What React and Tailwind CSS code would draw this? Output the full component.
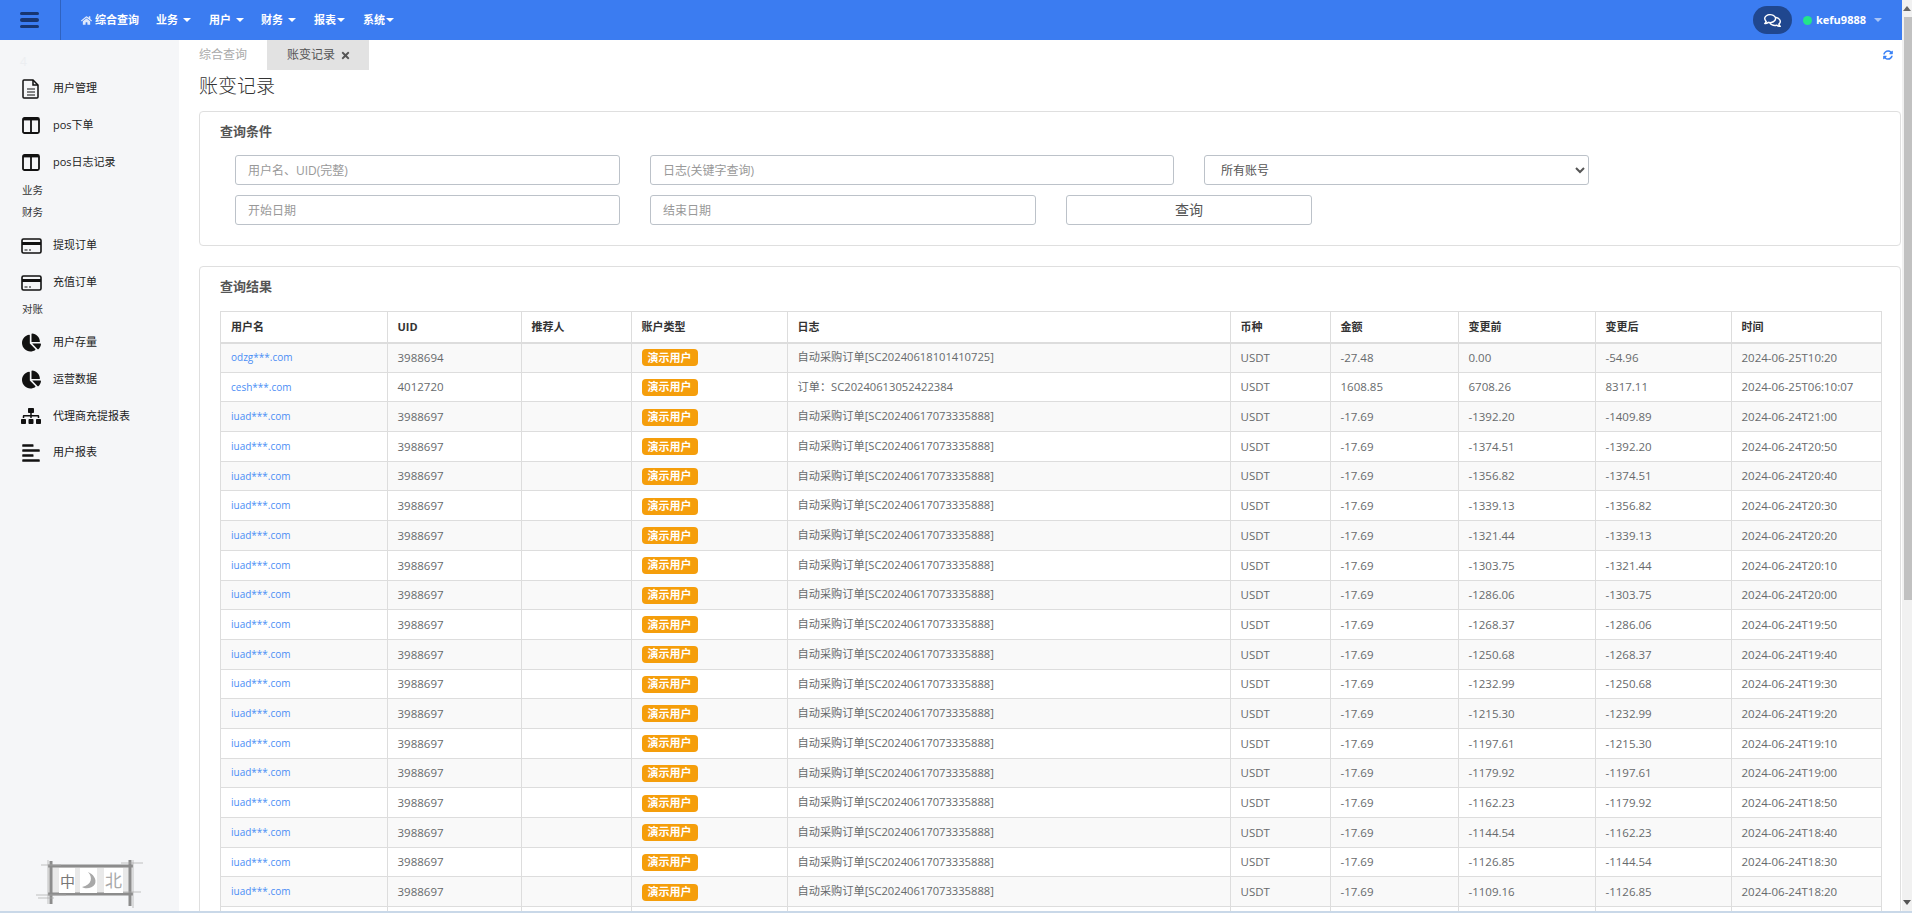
import { FaHome, FaTimes, FaSyncAlt, FaRegComments, FaChartPie, FaSitemap, FaAlignLeft } from "react-icons/fa";

const DocIcon = () => (
  <svg width="18" height="20" viewBox="0 0 18 20" fill="none" stroke="#111" strokeWidth="1.5">
    <path d="M2 1h9l5 5v12a1 1 0 0 1-1 1H2a1 1 0 0 1-1-1V2a1 1 0 0 1 1-1z" />
    <path d="M11 1v5h5" />
    <path d="M5 10h8M5 13h8M5 16h8" strokeWidth="1.2" />
  </svg>
);

const ColumnsIcon = () => (
  <svg width="18" height="17" viewBox="0 0 18 17" fill="none" stroke="#111">
    <rect x="1" y="1" width="16" height="15" rx="1.5" strokeWidth="1.8" />
    <path d="M1 2.2h16" strokeWidth="2.4" />
    <path d="M9 2v14" strokeWidth="1.8" />
  </svg>
);

const CardIcon = () => (
  <svg width="21" height="16" viewBox="0 0 21 16" fill="none" stroke="#111">
    <rect x="1" y="1" width="19" height="14" rx="1.5" strokeWidth="1.6" />
    <path d="M1 5.5h19" strokeWidth="3" />
    <path d="M3.5 12h3M8 12h2" strokeWidth="1.2" />
  </svg>
);

const Logo = () => (
  <svg width="112" height="50" viewBox="0 0 112 50" fill="none">
    <rect x="12" y="9" width="84" height="27" fill="#e9e9e9" />
    <g stroke="#8c8c8c">
      <path d="M12 8h85M12 36h85" strokeWidth="3" />
      <path d="M15 3v43M94 2v46" strokeWidth="3" />
    </g>
    <g stroke="#aaa" strokeWidth="0.7">
      <path d="M5 7h20M85 5h22M0 37h30M80 34h25M2 40h16" />
      <path d="M12 2v44M97 2v50" />
    </g>
    <rect x="23" y="10" width="16" height="25" fill="#fff" />
    <rect x="44" y="10" width="17" height="25" fill="#fff" />
    <rect x="68" y="10" width="19" height="25" fill="#fff" />
    <text x="24" y="29" fontSize="15" fill="#777" fontFamily="Noto Sans CJK SC, sans-serif">中</text>
    <path d="M52 14c5 5 4 13-6 15 3 2 10 2 13-3 2-5-2-10-7-12z" fill="#a8a8a8" />
    <text x="69" y="29" fontSize="17" fill="#a8a8a8" fontFamily="Noto Sans CJK SC, sans-serif">北</text>
  </svg>
);

const Caret = ({ tone = "border-t-white" }) => (
  <span className={`inline-block w-0 h-0 border-x-[4px] border-x-transparent border-t-[4px] ${tone}`} />
);

const navItems = [
  { label: "业务", gap: "ml-[5px]", width: "w-[53px]" },
  { label: "用户", gap: "ml-[5px]", width: "w-[52px]" },
  { label: "财务", gap: "ml-[5px]", width: "w-[53px]" },
  { label: "报表", gap: "ml-[1px]", width: "w-[49px]" },
  { label: "系统", gap: "ml-[1px]", width: "w-[40px]" },
];

const menu = [
  { type: "item", icon: <DocIcon />, label: "用户管理", cls: "h-[37px]" },
  { type: "item", icon: <ColumnsIcon />, label: "pos下单", cls: "h-[37px]" },
  { type: "item", icon: <ColumnsIcon />, label: "pos日志记录", cls: "h-[37px]" },
  { type: "head", label: "业务", cls: "h-[20px]" },
  { type: "head", label: "财务", cls: "h-[24px]" },
  { type: "item", icon: <CardIcon />, label: "提现订单", cls: "h-[37px] mt-[2px]" },
  { type: "item", icon: <CardIcon />, label: "充值订单", cls: "h-[37px]" },
  { type: "head", label: "对账", cls: "h-[18px]" },
  { type: "item", icon: <FaChartPie size={19} color="#111" />, label: "用户存量", cls: "h-[37px] mt-[5px]" },
  { type: "item", icon: <FaChartPie size={19} color="#111" />, label: "运营数据", cls: "h-[37px]" },
  { type: "item", icon: <FaSitemap size={20} color="#111" />, label: "代理商充提报表", cls: "h-[36px]" },
  { type: "item", icon: <FaAlignLeft size={20} color="#111" />, label: "用户报表", cls: "h-[37px]" },
];

const columns = [
  { label: "用户名", cls: "w-[166.5px]" },
  { label: "UID", cls: "w-[134px]" },
  { label: "推荐人", cls: "w-[110px]" },
  { label: "账户类型", cls: "w-[156px]" },
  { label: "日志", cls: "w-[443px]" },
  { label: "币种", cls: "w-[100px]" },
  { label: "金额", cls: "w-[128px]" },
  { label: "变更前", cls: "w-[137px]" },
  { label: "变更后", cls: "w-[136px]" },
  { label: "时间", cls: "w-[150px]" },
];

const times = ["21:00", "20:50", "20:40", "20:30", "20:20", "20:10", "20:00", "19:50", "19:40", "19:30", "19:20", "19:10", "19:00", "18:50", "18:40", "18:30", "18:20", "18:10"];

const rows = [
  { user: "odzg***.com", uid: "3988694", log: "自动采购订单[SC20240618101410725]", amount: "-27.48", before: "0.00", after: "-54.96", time: "2024-06-25T10:20" },
  { user: "cesh***.com", uid: "4012720", log: "订单：SC20240613052422384", amount: "1608.85", before: "6708.26", after: "8317.11", time: "2024-06-25T06:10:07" },
  ...times.map((t, i) => ({
    user: "iuad***.com",
    uid: "3988697",
    log: "自动采购订单[SC20240617073335888]",
    amount: "-17.69",
    before: (-1392.2 + i * 17.69).toFixed(2),
    after: (-1409.89 + i * 17.69).toFixed(2),
    time: `2024-06-24T${t}`,
  })),
];

const inputCls = "h-[30px] border border-[#bcc2c9] rounded-[3px] px-3 text-xs text-[#555] placeholder:text-[#999] outline-none bg-white";
const cellCls = "border border-[#ddd] px-[10px] py-0";
const tdCls = `${cellCls} text-[11.5px] font-normal text-[#676a6c]`;

export default function App() {
  return (
    <div className="relative flex h-[913px] overflow-hidden bg-white [font-family:'Open_Sans','Noto_Sans_CJK_SC',sans-serif]">
      <div className="flex flex-col w-[1902px] shrink-0">
        {/* Barra superior */}
        <header className="flex items-center h-10 shrink-0 bg-[#3b7cf1] text-white">
          <div className="flex flex-col justify-center gap-[3px] w-[61px] h-10 pl-5 pr-[21px] border-r border-[#2f62c0]">
            <span className="h-[3.5px] rounded-sm bg-[#173570]" />
            <span className="h-[3.5px] rounded-sm bg-[#173570]" />
            <span className="h-[3.5px] rounded-sm bg-[#173570]" />
          </div>
          <nav className="flex items-center ml-5 text-[11px] font-bold">
            <FaHome size={11} className="mr-[3px] text-[#dfe9fc]" />
            <span className="w-[61px]">综合查询</span>
            {navItems.map((item) => (
              <span key={item.label} className={`flex items-center ${item.width}`}>
                {item.label}
                <span className={`flex ${item.gap}`}>
                  <Caret />
                </span>
              </span>
            ))}
          </nav>
          <div className="flex items-center ml-auto">
            <button className="flex items-center justify-center w-[39px] h-7 rounded-full bg-[#20478f]">
              <FaRegComments size={17} color="#fff" />
            </button>
            <span className="w-[9px] h-[9px] ml-[11px] rounded-full bg-[#22e58a]" />
            <span className="ml-[4px] text-[11px] font-bold">kefu9888</span>
            <span className="flex ml-[8px] mr-5">
              <Caret tone="border-t-[#a9c5f7]" />
            </span>
          </div>
        </header>

        <div className="flex flex-1 min-h-0">
          {/* Menu lateral */}
          <aside className="relative flex flex-col w-[179px] shrink-0 bg-[#f5f6f8] pt-[14px]">
            <span className="pl-[20px] h-[16px] text-xs leading-4 text-[#eceef1]">4</span>
            <div>
              {menu.map((m) =>
                m.type === "head" ? (
                  <div key={m.label} className={`flex items-center pl-[22px] text-[10.5px] text-[#333] ${m.cls}`}>
                    {m.label}
                  </div>
                ) : (
                  <div key={m.label} className={`flex items-center text-[11px] text-[#222] ${m.cls}`}>
                    <span className="flex justify-center w-[62px]">{m.icon}</span>
                    <span className="-ml-[9px]">{m.label}</span>
                  </div>
                )
              )}
            </div>
            <div className="mt-auto ml-[36px] mb-[5px]">
              <Logo />
            </div>
          </aside>

          {/* Contenido */}
          <main className="flex-1 min-w-0 overflow-hidden pl-5">
            <div className="flex items-start h-[30px] pr-[9px]">
              <span className="flex items-center h-[30px] w-[68px] text-xs text-[#aaa]">综合查询</span>
              <span className="flex items-center h-[30px] w-[102px] pl-5 gap-[5px] bg-[#e2e2e2] text-xs text-[#555]">
                账变记录
                <FaTimes size={11} className="text-[#555]" />
              </span>
              <FaSyncAlt size={10} className="ml-auto mt-[10px] text-[#3b82f6]" />
            </div>
            <h1 className="h-[33px] mb-[8px] flex items-center text-[19px] font-light text-[#333]">账变记录</h1>

            <section className="h-[135px] mr-px border border-[#dfdfdf] rounded-[4px] pl-[35px] pt-[43px] relative">
              <h2 className="absolute left-5 top-[10px] text-[13px] leading-[18px] font-bold text-[#555]">查询条件</h2>
              <div className="flex gap-[30px]">
                <input className={`${inputCls} w-[385px]`} placeholder="用户名、UID(完整)" />
                <input className={`${inputCls} w-[524px]`} placeholder="日志(关键字查询)" />
                <select className="h-[30px] w-[385px] border border-[#bcc2c9] rounded-[3px] pl-3 text-xs text-[#555] bg-white outline-none">
                  <option>所有账号</option>
                </select>
              </div>
              <div className="flex gap-[30px] mt-[10px]">
                <input className={`${inputCls} w-[385px]`} placeholder="开始日期" />
                <input className={`${inputCls} w-[386px]`} placeholder="结束日期" />
                <button className="h-[30px] w-[246px] border border-[#bcc2c9] rounded-[3px] text-sm text-[#555] bg-white">查询</button>
              </div>
            </section>

            <section className="mt-5 mr-px border border-[#dfdfdf] rounded-[4px] px-5 pt-[10px]">
              <h2 className="text-[13px] leading-[18px] font-bold text-[#555] mb-[16px]">查询结果</h2>
              <table className="table-fixed w-[1660.5px] border-collapse">
                <thead>
                  <tr className="h-[31px]">
                    {columns.map((c) => (
                      <th key={c.label} className={`${cellCls} border-b-[2px] text-left text-[11px] font-bold text-[#333] ${c.cls}`}>
                        {c.label}
                      </th>
                    ))}
                  </tr>
                </thead>
                <tbody>
                  {rows.map((r, i) => (
                    <tr key={r.time} className={`h-[29.7px] ${i % 2 === 0 ? "bg-[#f9f9f9]" : "bg-white"}`}>
                      <td className={`${cellCls} text-[10px] font-normal text-[#4b8ef5]`}>{r.user}</td>
                      <td className={tdCls}>{r.uid}</td>
                      <td className={tdCls}></td>
                      <td className={tdCls}>
                        <span className="inline-flex items-center h-[17px] px-[6px] rounded-[4px] bg-[#f59e0b] text-[11px] font-bold text-white">演示用户</span>
                      </td>
                      <td className={`${cellCls} text-[11.2px] font-normal text-[#676a6c] whitespace-nowrap`}>{r.log}</td>
                      <td className={tdCls}>USDT</td>
                      <td className={tdCls}>{r.amount}</td>
                      <td className={tdCls}>{r.before}</td>
                      <td className={tdCls}>{r.after}</td>
                      <td className={`${tdCls} whitespace-nowrap`}>{r.time}</td>
                    </tr>
                  ))}
                </tbody>
              </table>
            </section>
          </main>
        </div>
      </div>

      {/* Barra de desplazamiento */}
      <div className="flex flex-col items-center w-[10px] shrink-0 bg-[#f1f1f1]">
        <span className="mt-[6px] w-0 h-0 border-x-[4px] border-x-transparent border-b-[5px] border-b-[#666]" />
        <span className="mt-[6px] self-end w-2 h-[583px] bg-[#c1c1c1]" />
        <span className="mt-auto mb-[8px] w-0 h-0 border-x-[4px] border-x-transparent border-t-[5px] border-t-[#555]" />
      </div>

      {/* Linea inferior de la ventana */}
      <div className="absolute left-0 right-0 bottom-0 h-[2px] bg-[#c9d8e8]" />
    </div>
  );
}
